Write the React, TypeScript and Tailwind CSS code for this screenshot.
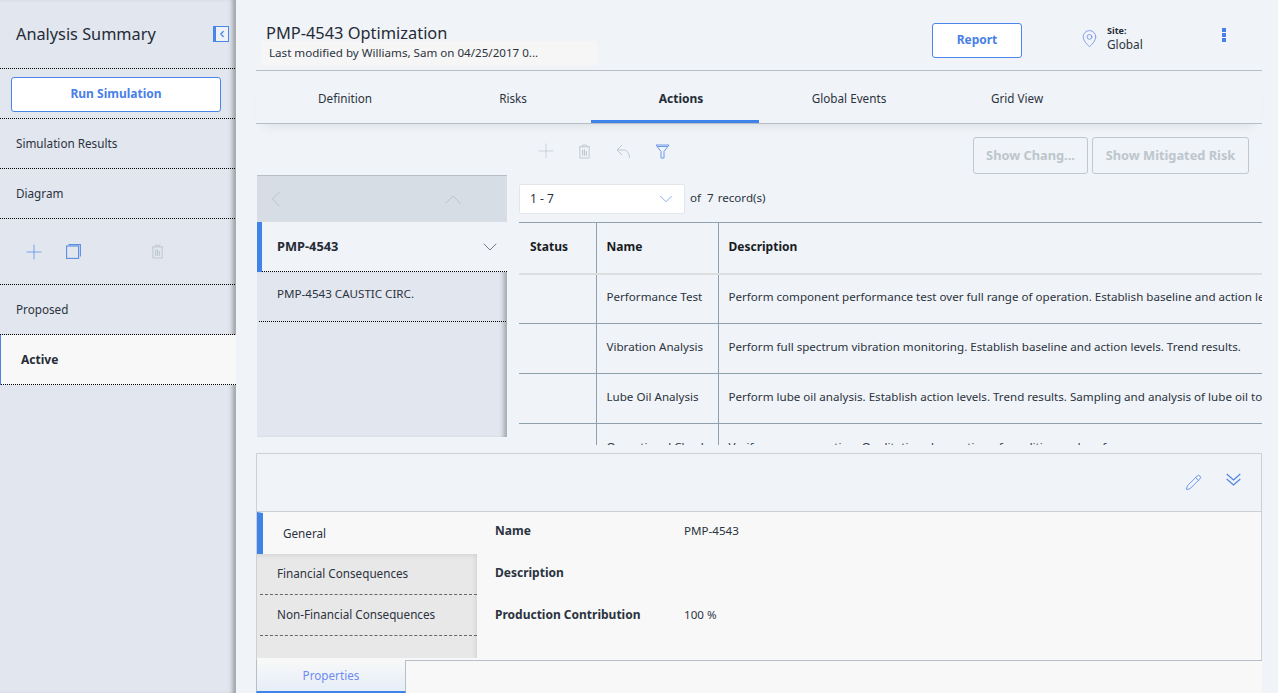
import React from "react";
import { Plus, ChevronDown, ChevronLeft, Pencil, MapPin } from "lucide-react";

const tabs = ["Definition", "Risks", "Actions", "Global Events", "Grid View"];

const rows = [
  ["Performance Test", "Perform component performance test over full range of operation. Establish baseline and action levels. Trend results."],
  ["Vibration Analysis", "Perform full spectrum vibration monitoring. Establish baseline and action levels. Trend results."],
  ["Lube Oil Analysis", "Perform lube oil analysis. Establish action levels. Trend results. Sampling and analysis of lube oil to determine condition."],
  ["Operational Check", "Verify proper operation. Qualitative observation of condition and performance."],
];

function TrashIcon({ className }: { className?: string }) {
  return (
    <svg viewBox="0 0 14 16" fill="none" stroke="currentColor" strokeWidth="1" className={className}>
      <path d="M1 3h12M4.5 3V1.2h5V3M2 3v12h10V3" />
      <path d="M5 6v6.5M7 5.5v7M9 7.5v5" strokeWidth="1.2" />
    </svg>
  );
}

function CopyIcon() {
  return (
    <svg viewBox="0 0 15 15" fill="none" stroke="#5b8fe0" strokeWidth="1.1" className="w-[15px] h-[15px]">
      <rect x="0.6" y="2" width="12" height="12.4" />
      <path d="M2.5 0.6h11.9v12" />
    </svg>
  );
}

function SideRow({ label }: { label: string }) {
  return (
    <div className="h-[50px] flex items-center pl-4 pt-px text-[11.7px] text-[#2b3340] border-b border-dotted border-black">
      {label}
    </div>
  );
}

export default function App() {
  return (
    <div className="flex h-[693px] w-[1278px] overflow-hidden bg-[#f0f3f7] text-[#2b3340] font-['Noto_Sans',sans-serif]">
      {/* sidebar */}
      <aside className="w-[236px] shrink-0 bg-[#e2e6ee] shadow-[inset_-5px_0_5px_-3px_rgba(0,0,0,0.35)] border-r border-[#a9adb2] flex flex-col">
        <div className="h-[69px] flex items-center justify-between pl-4 pr-[6px] border-b border-dotted border-black">
          <span className="text-[16.3px] text-[#252b36]">Analysis Summary</span>
          <span className="w-4 h-4 border border-[#4a86e8] border-l-[3px] flex items-center justify-center bg-[#eef2f8]">
            <ChevronLeft size={10} strokeWidth={3} className="text-[#4a86e8]" />
          </span>
        </div>
        <div className="h-[50px] flex items-center pt-[2px] pl-[11px] pr-[14px] border-b border-dotted border-black">
          <button className="w-full h-[35px] pb-px bg-white border border-[#4a86e8] rounded-[3px] text-[12px] font-bold text-[#4a7fe8]">
            Run Simulation
          </button>
        </div>
        <SideRow label="Simulation Results" />
        <SideRow label="Diagram" />
        <div className="h-[66px] flex items-center pl-[22px] border-b border-dotted border-black">
          <Plus size={24} strokeWidth={0.7} className="text-[#4a86e8]" />
          <span className="ml-[20px]"><CopyIcon /></span>
          <TrashIcon className="ml-[70px] w-[13px] h-[15px] text-[#bcc7d0]" />
        </div>
        <SideRow label="Proposed" />
        <div className="h-[50px] bg-[#f8f8f8] border-l border-[#4a86e8] -mr-px">
          <div className="h-full flex items-center pl-[20px] pt-px text-[12px] font-bold text-[#252b36] border-b border-dotted border-black">
            Active
          </div>
        </div>
      </aside>

      {/* main */}
      <main className="flex-1 min-w-0 flex flex-col pl-5 pr-4">
        <header className="h-[71px] shrink-0 flex items-start border-b border-[#b8bec6]">
          <div className="pt-[22px] pl-[5px] w-[676px] shrink-0">
            <div className="text-[16.4px] leading-[21px] pl-[5px] text-[#252b36]">PMP-4543 Optimization</div>
            <div className="w-[336px] h-[24px] -mt-[2px] bg-[#f6f6f6] pl-2 text-[11.6px] leading-[24px]">
              Last modified by Williams, Sam on 04/25/2017 0...
            </div>
          </div>
          <button className="mt-[23px] w-[90px] h-[35px] pb-[2px] bg-white border border-[#4a86e8] rounded-[3px] text-[12px] font-bold text-[#4a7fe8]">
            Report
          </button>
          <MapPin size={19} strokeWidth={0.9} className="mt-[29px] ml-[58px] text-[#5b80e8]" />
          <div className="ml-[8px] mt-[25px]">
            <div className="text-[9px] leading-[11px] font-bold text-[#252b36]">Site:</div>
            <div className="text-[11.8px] leading-[17px]">Global</div>
          </div>
          <svg viewBox="0 0 4 14" fill="#4a7fe8" className="w-1 h-[14px] mt-[28px] ml-[79px]">
            <rect width="4" height="4" />
            <rect y="5" width="4" height="4" />
            <rect y="10" width="4" height="4" />
          </svg>
        </header>

        <nav className="h-[53px] shrink-0 flex border-b border-[#b8bec6] shadow-[0_8px_12px_-8px_rgba(0,0,0,0.12)]">
          <div className="flex -ml-px">
            {tabs.map((t) => (
              <div
                key={t}
                className={
                  t === "Actions"
                    ? "w-[168px] flex items-center justify-center pl-3 pt-[7px] text-[12px] font-bold text-[#252b36] border-b-[3px] border-[#3f83e8]"
                    : "w-[168px] flex items-center justify-center pl-3 pt-[4px] text-[11.7px]"
                }
              >
                {t}
              </div>
            ))}
          </div>
        </nav>

        <div className="h-[51px] shrink-0 flex items-center">
          <div className="ml-[278px] flex items-center mt-[3px]">
            <Plus size={24} strokeWidth={0.7} className="text-[#bcc7d0]" />
            <TrashIcon className="ml-[20px] w-[13px] h-[15px] text-[#bcc7d0]" />
            <svg viewBox="0 0 15 15" fill="none" stroke="#bcc7d0" strokeWidth="1" className="ml-[25px] w-[15px] h-[15px]">
              <path d="M6 1 1 6l5 5M1 6h6c4 0 6.5 3 6.5 8" />
            </svg>
            <svg viewBox="0 0 15 15" fill="none" stroke="#5b8fe8" strokeWidth="0.9" className="ml-[24px] w-[15px] h-[15px]">
              <path d="M1 1h13L9 7.5V14H6V7.5zM2.5 2.5h10" />
            </svg>
          </div>
          <button className="ml-[303px] mt-[12px] w-[115px] h-[37px] border border-[#c0c8cf] rounded-[3px] text-[12.8px] font-bold text-[#bcc6cd]">
            Show Chang...
          </button>
          <button className="ml-1 mt-[12px] w-[157px] h-[37px] border border-[#c0c8cf] rounded-[3px] text-[12.8px] font-bold text-[#bcc6cd]">
            Show Mitigated Risk
          </button>
        </div>

        <div className="h-[278px] shrink-0 flex items-start">
          {/* tree */}
          <div className="w-[250px] ml-px shrink-0 h-[262px] flex flex-col">
            <div className="h-[47px] bg-[#d7dde4] border-t border-[#b8bec6] flex items-center justify-between pl-[14px] pr-[46px]">
              <svg viewBox="0 0 10 16" fill="none" stroke="#b8c2cb" className="w-[10px] h-4"><path d="M9 .5 1.5 8 9 15.5" /></svg>
              <svg viewBox="0 0 16 9" fill="none" stroke="#b8c2cb" className="w-4 h-[9px]"><path d="M.5 8.5 8 1l7.5 7.5" /></svg>
            </div>
            <div className="h-[50px] flex border-l-[5px] border-[#3f83e8]">
              <div className="flex-1 flex items-center justify-between pl-[15px] pr-[5px] text-[12.8px] font-bold text-[#252b36] border-b border-dotted border-black">
                PMP-4543
                <ChevronDown size={24} strokeWidth={0.7} className="text-[#3d4550]" />
              </div>
            </div>
            <div className="flex-1 bg-[#e2e6ee] shadow-[inset_-5px_0_5px_-3px_rgba(0,0,0,0.3)] border-r border-[#aab0b6]">
              <div className="ml-[2px] h-[50px] pl-[18px] pt-[12px] text-[11.6px] leading-[20px] border-b border-dotted border-black">
                PMP-4543 CAUSTIC CIRC.
              </div>
            </div>
          </div>

          {/* grid */}
          <div className="ml-3 flex-1 min-w-0 h-[270px] flex flex-col overflow-hidden">
            <div className="h-[47px] shrink-0 flex items-start pt-[9px]">
              <div className="w-[166px] h-[30px] bg-white border border-[#e2e5e9] rounded-[2px] flex items-center justify-between pl-[10px] pr-[7px] text-[12px]">
                1 - 7
                <ChevronDown size={22} strokeWidth={0.7} className="text-[#4a7fe8]" />
              </div>
              <span className="ml-[5px] mt-[6px] text-[11.6px] leading-[16px] whitespace-pre">of  7</span>
              <span className="ml-1 mt-[6px] text-[11.6px] leading-[16px]">record(s)</span>
            </div>
            <table className="table-fixed w-[743px] border-collapse text-[11.6px]">
              <thead>
                <tr className="h-[51px] border-t border-[#8fa0ae] border-b-2 border-b-[#dcdee0] text-[12px] text-left text-[#181c24]">
                  <th className="w-[77px] pl-[11px] pb-[2px] font-bold">Status</th>
                  <th className="w-[122px] pl-[10px] pb-[2px] font-bold border-l border-[#8fa0ae]">Name</th>
                  <th className="pl-[10px] pb-[2px] font-bold border-l border-[#8fa0ae]">Description</th>
                </tr>
              </thead>
              <tbody>
                {rows.map(([name, desc]) => (
                  <tr key={name} className="h-[50px] border-b border-[#8fa0ae]">
                    <td />
                    <td className="pl-[10px] pb-[4px] border-l border-[#8fa0ae] whitespace-nowrap overflow-hidden">{name}</td>
                    <td className="pl-[10px] pb-[4px] border-l border-[#8fa0ae] whitespace-nowrap overflow-hidden">{desc}</td>
                  </tr>
                ))}
              </tbody>
            </table>
          </div>
        </div>

        {/* detail panel */}
        <div className="h-[59px] shrink-0 border border-[#cdd0d4] flex items-center justify-end pr-5">
          <Pencil size={17} strokeWidth={1.1} className="text-[#4a7fe8]" />
          <svg viewBox="0 0 15 13" fill="none" stroke="#4a7fe8" strokeWidth="1.1" className="ml-[24px] -mt-[6px] w-[15px] h-[13px]">
            <path d="M.7 1 7.5 7l6.8-6M.7 6l6.8 6 6.8-6" />
          </svg>
        </div>
        <div className="h-[148px] shrink-0 flex bg-[#f8f8f8] border-x border-[#cdd0d4]">
          <div className="w-[220px] h-[146px] shrink-0 flex flex-col">
            <div className="h-[42px] flex items-center pl-[20px] text-[11.7px] bg-[#f8f8f8] border-t border-t-[#f8f8f8] border-l-[6px] border-l-[#3f83e8]">General</div>
            <div className="flex-1 bg-[#e8e8e8] shadow-[inset_-4px_4px_5px_-3px_rgba(0,0,0,0.1)]">
              <div className="ml-[3px] h-[41px] flex items-center pl-[17px] text-[11.7px] border-b border-dashed border-[#666]">Financial Consequences</div>
              <div className="ml-[3px] h-[41px] flex items-center pl-[17px] text-[11.7px] border-b border-dashed border-[#666]">Non-Financial Consequences</div>
            </div>
          </div>
          <div className="flex-1 pl-[18px] pt-[10px] grid grid-cols-[189px_1fr] auto-rows-[42px] text-[12px]">
            <span className="font-bold">Name</span><span className="text-[11.6px]">PMP-4543</span>
            <span className="font-bold">Description</span><span />
            <span className="font-bold">Production Contribution</span><span className="text-[11.6px]">100 %</span>
          </div>
        </div>
        <div className="flex-1 flex bg-[#f8f8f8]">
          <div className="w-[150px] border-l border-r border-[#b8bec6] border-b-2 border-b-[#3f83e8] flex items-center justify-center text-[11.7px] text-[#6d8bf0] bg-gradient-to-b from-[#f8f8f8] to-[#e6eef8]">
            Properties
          </div>
          <div className="flex-1 border-t border-[#b8bec6]" />
        </div>
      </main>
    </div>
  );
}
